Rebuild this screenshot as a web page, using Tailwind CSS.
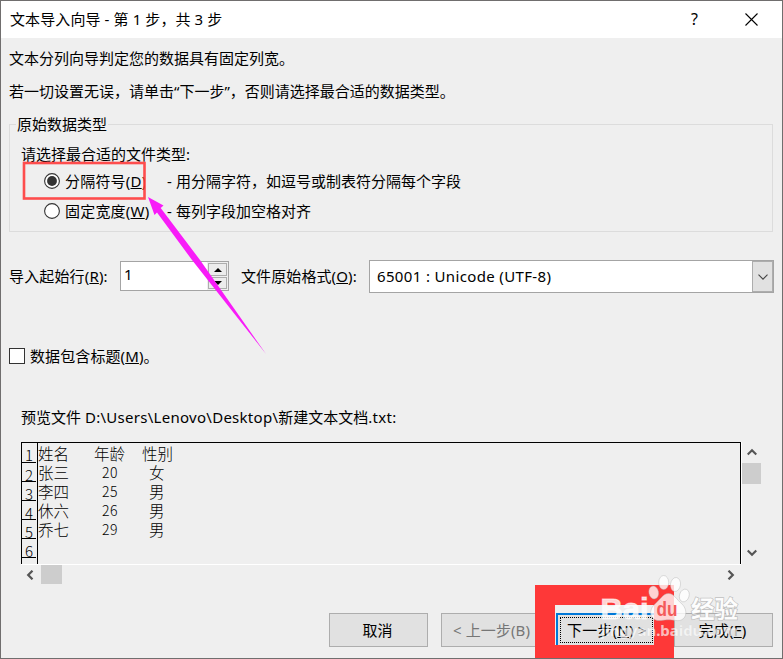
<!DOCTYPE html>
<html lang="zh-CN">
<head>
<meta charset="utf-8">
<title>文本导入向导</title>
<script src="https://cdn.jsdelivr.net/npm/@tailwindcss/browser@4"></script>
</head>
<body class="w-[783px] h-[659px] overflow-hidden">
<div class="relative w-[783px] h-[659px] border border-[#706e6e] bg-[#efefef] flex flex-col overflow-hidden text-[15px] leading-[20px] text-black font-['Noto_Sans','Noto_Sans_CJK_SC',sans-serif] whitespace-nowrap">
  <header class="h-[37px] shrink-0 bg-white flex items-center pl-[9px] pr-[24px]">
    <span class="pb-[2px] tracking-[.1px]">文本导入向导 - 第 1 步，共 3 步</span>
    <span class="ml-auto text-[16px] mr-[47px] pb-[2px]">?</span>
    <svg class="w-[13px] h-[13px]" viewBox="0 0 13 13" fill="none" stroke="#000" stroke-width="1.1"><path d="M.5 .5 12.5 12.5M12.5 .5.5 12.5"/></svg>
  </header>

  <p class="h-[42px] shrink-0 pl-[8px] flex items-center pb-[2px]">文本分列向导判定您的数据具有固定列宽。</p>
  <p class="h-[22px] shrink-0 pl-[8px] flex items-center">若一切设置无误，请单击“下一步”，否则请选择最合适的数据类型。</p>

  <section class="mt-[22px] ml-[8px] w-[764px] h-[108px] shrink-0 border border-[#dcdcdc] flex flex-col">
    <h2 class="-mt-[11px] ml-[6px] px-px h-[20px] self-start bg-[#efefef]">原始数据类型</h2>
    <p class="mt-[10px] ml-[11px] h-[20px]">请选择最合适的文件类型:</p>
    <div class="mt-[2px] h-[30px] ml-[34px] flex items-center">
      <svg class="w-[16px] h-[16px]" viewBox="0 0 16 16"><circle cx="8" cy="8" r="7.4" fill="#fff" stroke="#333" stroke-width="1.1"/><circle cx="8" cy="8" r="4.9" fill="#333"/></svg>
      <span class="ml-[5px] mr-[22px] w-[80px] overflow-hidden tracking-[.2px]">分隔符号(<u>D</u>)</span><span class="w-[9px]">-</span><span>用分隔字符，如逗号或制表符分隔每个字段</span>
    </div>
    <div class="h-[30px] ml-[34px] flex items-center">
      <svg class="w-[16px] h-[16px]" viewBox="0 0 16 16"><circle cx="8" cy="8" r="7.4" fill="#fff" stroke="#333" stroke-width="1.1"/></svg>
      <span class="ml-[5px] w-[102px] tracking-[.2px]">固定宽度(<u>W</u>)</span><span class="w-[9px]">-</span><span>每列字段加空格对齐</span>
    </div>
  </section>

  <div class="mt-[28px] h-[33px] shrink-0 pl-[8px] flex items-center">
    <label class="w-[111px] pb-[2px] tracking-[.15px]">导入起始行(<u>R</u>):</label>
    <div class="w-[109px] h-[30px] -mt-px bg-white border border-[#a4a4a4] flex justify-between">
      <span class="pl-[3px] pt-[2px]">1</span>
      <div class="w-[21px] h-[28px] bg-[#efefef] p-px flex flex-col gap-px">
        <span class="h-[13px] w-[19px] border border-[#adadad] bg-[#ececec] flex items-center justify-center"><svg class="w-[8px] h-[4px]" viewBox="0 0 8 4"><path d="M0 4 4 0 8 4Z"/></svg></span>
        <span class="h-[12px] w-[19px] border border-[#adadad] bg-[#ececec] flex items-center justify-center"><svg class="w-[8px] h-[4px]" viewBox="0 0 8 4"><path d="M0 0 4 4 8 0Z"/></svg></span>
      </div>
    </div>
    <label class="ml-[12px] w-[128px] pb-[2px] tracking-[.1px]">文件原始格式(<u>O</u>):</label>
    <div class="w-[405px] h-[33px] bg-white border border-[#a4a4a4] flex items-center justify-between">
      <span class="pl-[7px] pb-[2px] tracking-[.35px]">65001 : Unicode (UTF-8)</span>
      <span class="w-[21px] h-full border border-[#adadad] bg-[#e1e1e1] flex items-center justify-center"><svg class="w-[10px] h-[6px]" viewBox="0 0 10 6" fill="none" stroke="#444" stroke-width="1.1"><path d="M.5 .7 5 5.2 9.5 .7"/></svg></span>
    </div>
  </div>

  <div class="mt-[53px] h-[20px] shrink-0 pl-[8px] flex items-center">
    <span class="w-[16px] h-[16px] bg-white border border-[#333] mr-[5px]"></span><span class="tracking-[.1px]">数据包含标题(<u>M</u>)。</span>
  </div>

  <p class="mt-[41px] h-[21px] shrink-0 pl-[20px]">预览文件 <span class="tracking-[.28px]">D:\Users\Lenovo\Desktop\</span>新建文本文档<span class="tracking-[.28px]">.txt:</span></p>

  <div class="mt-[14px] ml-[20px] h-[122px] shrink-0 flex">
    <div class="w-[720px] h-[122px] border border-b-0 border-black flex overflow-hidden text-[16px] leading-[19px] font-['Noto_Sans_CJK_SC',sans-serif] font-light">
      <div class="w-[16px] border-r border-black shrink-0 text-center text-[15px] pr-px">
        <div class="h-[20px] border-b border-black leading-[24px]">1</div>
        <div class="h-[19px] border-b border-black leading-[23px]">2</div>
        <div class="h-[19px] border-b border-black leading-[23px]">3</div>
        <div class="h-[19px] border-b border-black leading-[23px]">4</div>
        <div class="h-[19px] border-b border-black leading-[23px]">5</div>
        <div class="h-[19px] border-b border-black leading-[23px]">6</div>
      </div>
      <div class="pt-px grid grid-cols-[56px_48px_40px] auto-rows-[19px] content-start text-[15.5px] [&>i]:not-italic [&>i]:pl-[8px] [&>i]:text-[14px] [&>i]:tracking-[.4px] [&>b]:font-light [&>b]:pl-[7px]">
        <span>姓名</span><span>年龄</span><span>性别</span>
        <span>张三</span><i>20</i><b>女</b>
        <span>李四</span><i>25</i><b>男</b>
        <span>休六</span><i>26</i><b>男</b>
        <span>乔七</span><i>29</i><b>男</b>
      </div>
    </div>
    <div class="w-px h-full bg-white"></div>
    <div class="w-[19px] h-full flex flex-col items-center pt-[6px]">
      <svg class="w-[10px] h-[8px]" viewBox="0 0 10 8" fill="none" stroke="#555" stroke-width="2.2"><path d="M.7 6.5 5 2.2 9.3 6.5"/></svg>
      <span class="mt-[7px] w-[19px] h-[21px] bg-[#cdcdcd]"></span>
      <svg class="mt-[65px] w-[10px] h-[8px]" viewBox="0 0 10 8" fill="none" stroke="#555" stroke-width="2.2"><path d="M.7 1.5 5 5.8 9.3 1.5"/></svg>
    </div>
  </div>
  <div class="ml-[20px] w-[720px] h-[20px] shrink-0 border-t border-white flex items-center pl-[5px] pr-[6px]">
    <svg class="w-[8px] h-[10px]" viewBox="0 0 8 10" fill="none" stroke="#555" stroke-width="2.2"><path d="M6.5 .7 2.2 5 6.5 9.3"/></svg>
    <span class="ml-[7px] w-[21px] h-[19px] bg-[#cdcdcd]"></span>
    <svg class="ml-auto w-[8px] h-[10px]" viewBox="0 0 8 10" fill="none" stroke="#555" stroke-width="2.2"><path d="M1.5 .7 5.8 5 1.5 9.3"/></svg>
  </div>

  <footer class="mt-[29px] h-[34px] shrink-0 pl-[328px] flex">
    <button class="w-[99px] h-[34px] bg-[#e1e1e1] border border-[#adadad] pr-[2px]">取消</button>
    <button class="ml-[13px] w-[99px] h-[34px] bg-[#e1e1e1] border border-[#adadad] text-[#767676] text-left pl-[11px] tracking-[.1px]">&lt; 上一步(B)</button>
    <button class="ml-[16px] w-[101px] h-[34px] bg-[#e1e1e1] border-2 border-[#0078d7] p-[2px] -mr-px"><span class="w-full h-full border border-dotted border-black flex items-center pl-[6px] tracking-[.2px]">下一步(<u>N</u>)&nbsp;&gt;</span></button>
    <button class="ml-[18px] w-[99px] h-[34px] bg-[#e1e1e1] border border-[#adadad] pr-[2px] tracking-[.2px]">完成(<u>F</u>)</button>
  </footer>

  <!-- annotations and watermark over the dialog -->
  <svg class="absolute -left-px -top-px w-[783px] h-[659px] pointer-events-none" viewBox="0 0 783 659">
    <rect x="24" y="163" width="120.5" height="35.5" fill="none" stroke="#ff3b3b" stroke-opacity=".9" stroke-width="2.6"/>
    <path d="M148 197 163.500 205.500 160.700 208 200 260 266 354 192 260 157 212.500 154.500 215Z" fill="#f81cf8"/>
    <path fill="#fe3838" fill-rule="evenodd" d="M535 585H674V659H535ZM555 605V645H654V605Z"/>
    <g fill="#fff" fill-opacity=".78" stroke="#b0b0b0" stroke-opacity=".5" stroke-width=".8">
      <ellipse cx="653.700" cy="592.500" rx="4.800" ry="6.500" transform="rotate(-12 653.700 592.500)"/>
      <ellipse cx="663.700" cy="582.500" rx="5" ry="7"/>
      <ellipse cx="675.500" cy="584.500" rx="5" ry="7" transform="rotate(8 675.500 584.500)"/>
      <ellipse cx="684.300" cy="595.500" rx="4.800" ry="6.500" transform="rotate(18 684.300 595.500)"/>
      <path d="M668.500 593.500C674 593.500 677 600 682 604C689 611 686 622 676 620.500C670 619.500 667 619.500 661 620.500C650 621.500 648 611 654 605C660 600 663 593.500 668.500 593.500Z"/>
      <text x="600.500" y="619" textLength="48" lengthAdjust="spacingAndGlyphs" font-family="Liberation Sans, sans-serif" font-weight="bold" font-size="30" stroke="#fff" stroke-opacity=".6" stroke-width="1">Bai</text>
      <text x="691" y="617.500" textLength="47" lengthAdjust="spacingAndGlyphs" font-family="Noto Sans CJK SC, sans-serif" font-weight="bold" font-size="24" fill-opacity=".95" stroke-opacity=".75" stroke-width="1.4" paint-order="stroke">经验</text>
    </g>
    <text x="656.500" y="616" textLength="21" lengthAdjust="spacingAndGlyphs" font-family="Liberation Sans, sans-serif" font-weight="bold" font-size="20" fill="#f45a5a">du</text>
    <text x="601" y="636" textLength="137" lengthAdjust="spacingAndGlyphs" font-family="Noto Sans, sans-serif" font-weight="bold" font-size="15" fill="#fff" fill-opacity=".68" stroke="#bbb" stroke-opacity=".2" stroke-width=".5">jingyan.baidu.com</text>
  </svg>
</div>
</body>
</html>
